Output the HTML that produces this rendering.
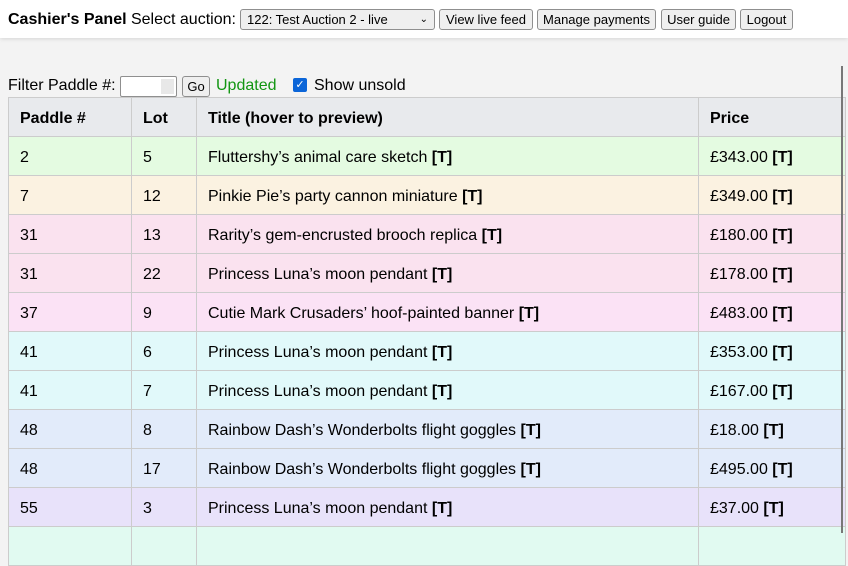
<!DOCTYPE html>
<html><head><style>
body{margin:0;width:848px;height:533px;overflow:hidden;background:#f3f3f3;font-family:"Liberation Sans",Arial,sans-serif;font-size:16px;color:#000;position:relative}
.top{position:absolute;left:0;top:0;width:848px;height:38px;background:#fff;box-shadow:0 1px 4px rgba(0,0,0,.12)}
.top .t{position:absolute;left:8px;top:11px;white-space:nowrap}
.btn{position:absolute;top:9px;height:21px;border:1px solid #8f8f8f;border-radius:3px;background:#efefef;font-size:13px;line-height:19px;text-align:center;box-sizing:border-box;white-space:nowrap;font-family:"Liberation Sans",Arial,sans-serif}
.sel{position:absolute;left:240px;top:9px;width:195px;height:21px;border:1px solid #8f8f8f;border-radius:3px;background:#efefef;box-sizing:border-box;font-size:13px;line-height:19px;padding-left:6px;white-space:nowrap}
.a{position:absolute;white-space:nowrap}
table{position:absolute;left:8px;top:97px;border-collapse:collapse;width:838px}
td,th{border:1px solid #ccc;height:39px;padding:3px 0 0 11px;text-align:left;box-sizing:border-box}
th{background:#e8eaed;font-weight:bold}
.vl{position:absolute;left:841px;top:66px;width:2px;height:467px;background:#777}
</style></head><body>
<div class="top">
<div class="t"><b>Cashier's Panel</b> Select auction:</div>
<div class="sel">122: Test Auction 2 - live<span style="position:absolute;right:6px;top:0;font-size:10px">⌄</span></div>
<div class="btn" style="left:439px;width:94px">View live feed</div>
<div class="btn" style="left:537px;width:119px">Manage payments</div>
<div class="btn" style="left:661px;width:75px">User guide</div>
<div class="btn" style="left:740px;width:53px">Logout</div>
</div>
<div class="a" style="left:8px;top:77px">Filter Paddle #:</div>
<div class="a" style="left:120px;top:76px;width:57px;height:21px;border:1px solid #8f8f8f;border-radius:2px;background:#fff;box-sizing:border-box"><span style="position:absolute;right:2px;top:2px;width:13px;height:15px;background:#e8e8e8"></span></div>
<div class="a" style="left:182px;top:76px;width:28px;height:21px;border:1px solid #8f8f8f;border-radius:3px;background:#efefef;font-size:13px;text-align:center;line-height:20px;box-sizing:border-box">Go</div>
<div class="a" style="left:216px;top:77px;color:#129612">Updated</div>
<div class="a" style="left:293px;top:78px;width:14px;height:14px;background:#0b65d8;border-radius:2px;color:#fff;font-size:11px;line-height:14px;text-align:center">✓</div>
<div class="a" style="left:314px;top:77px">Show unsold</div>
<table>
<colgroup><col style="width:123px"><col style="width:65px"><col style="width:502px"><col></colgroup>
<tr><th>Paddle #</th><th>Lot</th><th>Title (hover to preview)</th><th>Price</th></tr>
<tr style="background:#e4fbe1"><td>2</td><td>5</td><td>Fluttershy’s animal care sketch <b>[T]</b></td><td>£343.00 <b>[T]</b></td></tr>
<tr style="background:#fbf2e1"><td>7</td><td>12</td><td>Pinkie Pie’s party cannon miniature <b>[T]</b></td><td>£349.00 <b>[T]</b></td></tr>
<tr style="background:#fae2ef"><td>31</td><td>13</td><td>Rarity’s gem-encrusted brooch replica <b>[T]</b></td><td>£180.00 <b>[T]</b></td></tr>
<tr style="background:#fae2ef"><td>31</td><td>22</td><td>Princess Luna’s moon pendant <b>[T]</b></td><td>£178.00 <b>[T]</b></td></tr>
<tr style="background:#fbe2f5"><td>37</td><td>9</td><td>Cutie Mark Crusaders’ hoof-painted banner <b>[T]</b></td><td>£483.00 <b>[T]</b></td></tr>
<tr style="background:#e1f9fa"><td>41</td><td>6</td><td>Princess Luna’s moon pendant <b>[T]</b></td><td>£353.00 <b>[T]</b></td></tr>
<tr style="background:#e1f9fa"><td>41</td><td>7</td><td>Princess Luna’s moon pendant <b>[T]</b></td><td>£167.00 <b>[T]</b></td></tr>
<tr style="background:#e2ebfa"><td>48</td><td>8</td><td>Rainbow Dash’s Wonderbolts flight goggles <b>[T]</b></td><td>£18.00 <b>[T]</b></td></tr>
<tr style="background:#e2ebfa"><td>48</td><td>17</td><td>Rainbow Dash’s Wonderbolts flight goggles <b>[T]</b></td><td>£495.00 <b>[T]</b></td></tr>
<tr style="background:#e8e2fa"><td>55</td><td>3</td><td>Princess Luna’s moon pendant <b>[T]</b></td><td>£37.00 <b>[T]</b></td></tr>
<tr style="background:#e1faf1"><td>&nbsp;</td><td></td><td></td><td></td></tr>
</table>
<div class="vl"></div>
</body></html>
